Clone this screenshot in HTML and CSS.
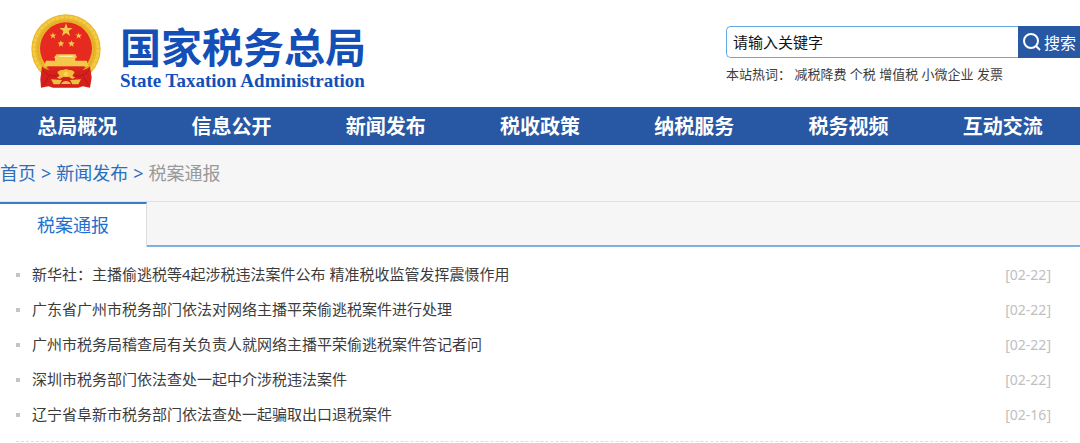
FILE: index.html
```html
<!DOCTYPE html>
<html lang="zh-CN">
<head>
<meta charset="utf-8">
<meta name="viewport" content="width=device-width, initial-scale=1">
<title>税案通报 - 国家税务总局</title>
<link rel="stylesheet" href="styles.css">
</head>
<body>
<header class="header">
  <div class="brand">
    <svg class="emblem" viewBox="30 24 216 228" aria-hidden="true">
      <circle cx="138" cy="132" r="104" fill="#e9b62c"/>
      <circle cx="138" cy="132" r="96" fill="none" stroke="#f3cb45" stroke-width="9" stroke-dasharray="12 2"/>
      <circle cx="138" cy="132" r="84" fill="none" stroke="#dda827" stroke-width="3" stroke-dasharray="9 3"/>
      <circle cx="138" cy="130" r="78" fill="#e62a20"/>
      <g fill="#f3c94c">
        <path d="M138 55l5 14h15l-12 9 4 15-12-9-12 9 4-15-12-9h15z"/>
        <path d="M99 82l2 7 8-1-6 5 3 8-7-5-6 5 2-7-6-5h7z"/>
        <path d="M176 82l2 7h8l-6 5 2 7-6-5-7 5 3-8-6-5 8 1z"/>
        <path d="M123 106l2 6 8 1-6 5 2 7-6-4-7 4 2-7-5-5 7-1z"/>
        <path d="M155 106l2 6 7 1-5 5 2 7-7-4-6 4 2-7-6-5 8-1z"/>
        <path d="M110 148h57l4 10h-5v9h34l6 17H72l6-17h27v-9h-4z"/>
        <path d="M118 152h41v4h-41z" fill="#fff0a0"/>
      </g>
      <path d="M78 187h120l-20 16H98z" fill="#d8251d"/>
      <path d="M66 184c12 12 31 14 54 13l36 0c23 1 42-1 54-13l5 34-5 30-22-4-13 4h-76l-13-4-23 4-2-26z" fill="#d5201c"/>
      <path d="M69 195c9 16 28 20 50 18M207 195c-9 16-28 20-50 18M70 240l16-25M206 240l-16-25" fill="none" stroke="#b5161a" stroke-width="3"/>
      <path d="M112 202c8-10 16-5 26-10 10 5 18 0 26 10l-7 11 9 4-9 5-10-6h-18l-10 6-9-5 9-4z" fill="#f1bd37"/>
      <path d="M93 223l33 2-7 13H101zM183 223l-33 2 7 13h18zM123 237c6-12 24-12 30 0z" fill="#edc044"/>
      <circle cx="138" cy="207" r="7" fill="#f8d35c"/>
    </svg>
    <div class="brand-text">
      <h1 class="brand-cn">国家税务总局</h1>
      <p class="brand-en">State Taxation Administration</p>
    </div>
  </div>
  <div class="search">
    <form class="search-form" role="search">
      <input class="search-input" type="text" aria-label="搜索关键字" placeholder="请输入关键字">
      <button class="search-button" type="button">
        <svg class="search-icon" viewBox="0 0 20 20" aria-hidden="true"><circle cx="9" cy="9" r="7" fill="none" stroke="currentColor" stroke-width="2"/><path d="M14 14l4 4" stroke="currentColor" stroke-width="2"/></svg>
        搜索
      </button>
    </form>
    <p class="hot">本站热词： <a href="#">减税降费</a> <a href="#">个税</a> <a href="#">增值税</a> <a href="#">小微企业</a> <a href="#">发票</a></p>
  </div>
</header>
<nav class="nav">
  <a href="#">总局概况</a>
  <a href="#">信息公开</a>
  <a href="#">新闻发布</a>
  <a href="#">税收政策</a>
  <a href="#">纳税服务</a>
  <a href="#">税务视频</a>
  <a href="#">互动交流</a>
</nav>
<nav class="breadcrumb" aria-label="当前位置">
  <a href="#">首页</a><span>&gt;</span><a href="#">新闻发布</a><span>&gt;</span><span class="current">税案通报</span>
</nav>
<main>
  <div class="tabs"><h2 class="tab">税案通报</h2></div>
  <ul class="list">
    <li><a href="#">新华社：主播偷逃税等4起涉税违法案件公布 精准税收监管发挥震慑作用</a><time>[02-22]</time></li>
    <li><a href="#">广东省广州市税务部门依法对网络主播平荣偷逃税案件进行处理</a><time>[02-22]</time></li>
    <li><a href="#">广州市税务局稽查局有关负责人就网络主播平荣偷逃税案件答记者问</a><time>[02-22]</time></li>
    <li><a href="#">深圳市税务部门依法查处一起中介涉税违法案件</a><time>[02-22]</time></li>
    <li><a href="#">辽宁省阜新市税务部门依法查处一起骗取出口退税案件</a><time>[02-16]</time></li>
  </ul>
</main>
</body>
</html>
```
FILE: styles.css
```css
*,
*::before {
  box-sizing: border-box;
}

body {
  margin: 0;
  background: #fff;
  color: #3c3c3c;
  font-family: "Noto Sans", "Noto Sans CJK SC", sans-serif;
}

h1, h2, p, ul {
  margin: 0;
  padding: 0;
}

a {
  color: inherit;
  text-decoration: none;
}

.header {
  display: flex;
  justify-content: space-between;
  padding: 13px 0 14px 30px;
}

.brand {
  display: flex;
  gap: 18px;
}

.emblem {
  width: 72px;
  height: 76px;
}

.brand-text {
  padding-top: 8px;
  color: #144fb8;
  white-space: nowrap;
}

.brand-cn {
  font-family: "Noto Sans CJK SC", sans-serif;
  font-size: 41px;
  line-height: 48px;
  font-weight: 700;
}

.brand-en {
  font: bold 19px/24px "Liberation Serif", serif;
}

.search {
  flex: 0 1 354px;
  padding-top: 13px;
}

.search-form {
  display: flex;
}

.search-input {
  flex: 1;
  min-width: 0;
  height: 32px;
  padding: 0 6px;
  border: 1px solid #62a8e5;
  border-right: 0;
  border-radius: 5px 0 0 5px;
  font: inherit;
  font-size: 15px;
}

.search-input::placeholder {
  color: #111;
  opacity: 1;
}

.search-button {
  display: flex;
  align-items: center;
  gap: 2px;
  padding: 0 4px;
  border: 0;
  background: #2858a3;
  color: #fff;
  font: inherit;
  font-size: 16px;
  white-space: nowrap;
}

.search-icon {
  width: 20px;
  height: 20px;
}

.hot {
  padding-top: 6px;
  font-size: 13px;
  line-height: 20px;
}

.nav {
  display: grid;
  grid-template-columns: repeat(7, 1fr);
  padding-top: 2px;
  background: #2858a3;
  color: #fff;
  font-size: 20px;
  font-weight: 700;
  line-height: 36px;
  text-align: center;
}

.breadcrumb {
  display: flex;
  gap: 5px;
  padding: 14px 0;
  background: #f6f6f6;
  color: #2a6ebf;
  font-size: 18px;
  line-height: 28px;
}

.breadcrumb .current {
  color: #999;
}

.tabs {
  display: flex;
  border-top: 1px solid #e2e2e2;
  background: linear-gradient(#7fb0e2, #7fb0e2) bottom / 100% 2px no-repeat #f6f6f6;
}

.tab {
  padding: 0 37px;
  border-top: 2px solid #3a7dc9;
  border-right: 1px solid #ddd;
  background: #fff;
  color: #1f6fd0;
  font-size: 18px;
  font-weight: 400;
  line-height: 43px;
}

.list {
  margin: 0 12px 0 16px;
  padding: 10px 0 9px;
  border-bottom: 1px dashed #ddd;
  list-style: none;
}

.list li {
  display: flex;
  align-items: center;
  padding-right: 17px;
  font-size: 15px;
  line-height: 35px;
}

.list li::before {
  content: "";
  width: 4px;
  height: 4px;
  margin-right: 12px;
  background: #c4c4c4;
}

.list time {
  margin-left: auto;
  color: #c0c0c0;
  font-size: 14px;
}
```
